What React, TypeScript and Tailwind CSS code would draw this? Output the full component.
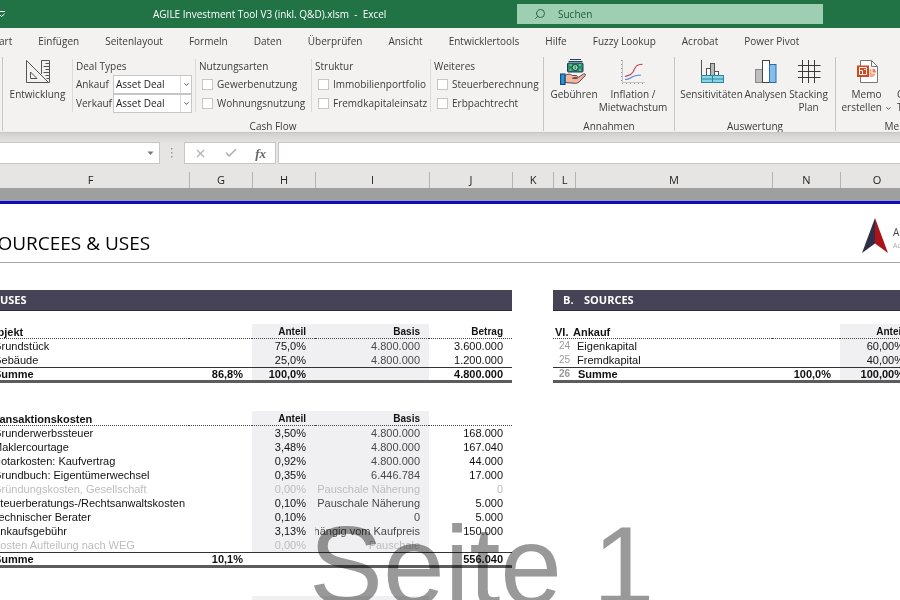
import type { ReactNode } from "react"
import { Check, ChevronDown, Search, X } from "lucide-react"

type Row = {
  no: string
  label: string
  share: string
  basis?: string
  amount?: string
  muted?: boolean
}

type Block = {
  numeral: string
  title: string
  amountHead?: string
  rows: Row[]
  total?: { no: string; pct: string; share: string; amount?: string; shaded: boolean }
}

const tabs = [
  "Start",
  "Einfügen",
  "Seitenlayout",
  "Formeln",
  "Daten",
  "Überprüfen",
  "Ansicht",
  "Entwicklertools",
  "Hilfe",
  "Fuzzy Lookup",
  "Acrobat",
  "Power Pivot",
]

const columns = [
  { name: "E", width: "w-[22px]" },
  { name: "F", width: "w-[198px]" },
  { name: "G", width: "w-[63px]" },
  { name: "H", width: "w-[63px]" },
  { name: "I", width: "w-[114px]" },
  { name: "J", width: "w-[83px]" },
  { name: "K", width: "w-[41px]" },
  { name: "L", width: "w-[22px]" },
  { name: "M", width: "w-[197px]" },
  { name: "N", width: "w-[68px]" },
  { name: "O", width: "w-[73px]" },
]

const uses: Block[] = [
  {
    numeral: "I.",
    title: "Objekt",
    amountHead: "Betrag",
    rows: [
      { no: "1", label: "Grundstück", share: "75,0%", basis: "4.800.000", amount: "3.600.000" },
      { no: "2", label: "Gebäude", share: "25,0%", basis: "4.800.000", amount: "1.200.000" },
    ],
    total: { no: "3", pct: "86,8%", share: "100,0%", amount: "4.800.000", shaded: true },
  },
  {
    numeral: "II.",
    title: "Transaktionskosten",
    rows: [
      { no: "4", label: "Grunderwerbssteuer", share: "3,50%", basis: "4.800.000", amount: "168.000" },
      { no: "5", label: "Maklercourtage", share: "3,48%", basis: "4.800.000", amount: "167.040" },
      { no: "6", label: "Notarkosten: Kaufvertrag", share: "0,92%", basis: "4.800.000", amount: "44.000" },
      { no: "7", label: "Grundbuch: Eigentümerwechsel", share: "0,35%", basis: "6.446.784", amount: "17.000" },
      { no: "8", label: "Gründungskosten, Gesellschaft", share: "0,00%", basis: "Pauschale Näherung", amount: "0", muted: true },
      { no: "9", label: "Steuerberatungs-/Rechtsanwaltskosten", share: "0,10%", basis: "Pauschale Näherung", amount: "5.000" },
      { no: "10", label: "Technischer Berater", share: "0,10%", basis: "0", amount: "5.000" },
      { no: "11", label: "Ankaufsgebühr", share: "3,13%", basis: "abhängig vom Kaufpreis", amount: "150.000" },
      { no: "12", label: "Kosten Aufteilung nach WEG", share: "0,00%", basis: "Pauschale", muted: true },
    ],
    total: { no: "13", pct: "10,1%", share: "", amount: "556.040", shaded: false },
  },
  { numeral: "III.", title: "Finanzierungskosten", rows: [] },
]

const sources: Block = {
  numeral: "VI.",
  title: "Ankauf",
  rows: [
    { no: "24", label: "Eigenkapital", share: "60,00%" },
    { no: "25", label: "Fremdkapital", share: "40,00%" },
  ],
  total: { no: "26", pct: "100,0%", share: "100,00%", shaded: true },
}

export default function App() {
  return (
    <div className="flex h-screen w-full flex-col overflow-hidden bg-white font-['Open_Sans','Noto_Sans',sans-serif] text-[10px] text-[#3b3b3b]">
      <TitleBar />
      <nav className="flex h-[26px] shrink-0 items-center gap-[26px] overflow-hidden bg-[#f3f2f1] whitespace-nowrap">
        {tabs.map((t) => (
          <button key={t} type="button" className="shrink-0 first:-ml-[10px]">
            {t}
          </button>
        ))}
      </nav>
      <Ribbon />
      <FormulaBar />
      <ColumnHeads />
      <Sheet />
    </div>
  )
}

function TitleBar() {
  return (
    <header className="flex h-[28px] shrink-0 items-center bg-[#217346] text-white">
      <button type="button" aria-label="Symbolleiste anpassen" className="w-[153px] shrink-0">
        <svg width="6" height="8" viewBox="0 0 6 8" fill="none" stroke="#fff" aria-hidden>
          <path d="M0 1.500h5M-1 4l2.500 2.500L4.500 4" />
        </svg>
      </button>
      <h1 className="w-[364px] shrink-0 whitespace-pre">AGILE Investment Tool V3 (inkl. Q&amp;D).xlsm  -  Excel</h1>
      <label className="flex h-[20px] w-[306px] items-center gap-[12px] bg-[#9fcfb3] pl-[17px] text-[#1c5c39]">
        <Search size={12} strokeWidth={1.75} className="-scale-x-100" aria-hidden />
        <input
          type="search"
          aria-label="Suchen"
          placeholder="Suchen"
          className="min-w-0 flex-1 bg-transparent outline-none placeholder:text-[#1c5c39]"
        />
      </label>
    </header>
  )
}

function Ribbon() {
  return (
    <div className="flex h-[79px] shrink-0 overflow-hidden border-b border-[#c8c6c4] bg-[#f3f2f1] pt-[3px] pb-[1px] whitespace-nowrap">
      <div className="w-[3px] shrink-0 border-r border-[#c8c6c4]" />
      <Group label="Cash Flow" className="w-[541px]">
        <RibbonButton label="Entwicklung" className="w-[69px]">
          <DesignIcon />
        </RibbonButton>
        <SubGroup title="Deal Types" className="w-[123px]">
          <DealSelect label="Ankauf" />
          <DealSelect label="Verkauf" />
        </SubGroup>
        <SubGroup title="Nutzungsarten" className="w-[116px]">
          <Tick label="Gewerbenutzung" />
          <Tick label="Wohnungsnutzung" />
        </SubGroup>
        <SubGroup title="Struktur" className="w-[119px]">
          <Tick label="Immobilienportfolio" />
          <Tick label="Fremdkapitaleinsatz" />
        </SubGroup>
        <SubGroup title="Weiteres" className="flex-1">
          <Tick label="Steuerberechnung" />
          <Tick label="Erbpachtrecht" />
        </SubGroup>
      </Group>
      <Group label="Annahmen" className="w-[131px]">
        <RibbonButton label="Gebühren" className="w-[60px]">
          <FeesIcon />
        </RibbonButton>
        <RibbonButton label={"Inflation /\nMietwachstum"} className="w-[58px]">
          <InflationIcon />
        </RibbonButton>
      </Group>
      <Group label="Auswertung" className="w-[161px]">
        <RibbonButton label="Sensitivitäten" className="w-[73px]">
          <SensitivityIcon />
        </RibbonButton>
        <RibbonButton label="Analysen" className="w-[35px]">
          <AnalysisIcon />
        </RibbonButton>
        <RibbonButton label={"Stacking\nPlan"} className="w-[51px]">
          <StackingIcon />
        </RibbonButton>
      </Group>
      <Group label="Memo" className="w-[128px]">
        <RibbonButton
          label={
            <>
              Memo
              <br />
              erstellen <ChevronDown size={7} strokeWidth={3} className="inline" aria-hidden />
            </>
          }
          className="w-[61px]"
        >
          <MemoIcon />
        </RibbonButton>
        <button type="button" className="flex flex-col pt-[31px] text-left leading-[13px] whitespace-pre">
          {"Chart\nTool"}
        </button>
      </Group>
    </div>
  )
}

function Group({ label, className, children }: { label: string; className: string; children: ReactNode }) {
  return (
    <section className={`flex shrink-0 flex-col border-r border-[#c8c6c4] ${className}`}>
      <div className="flex flex-1">{children}</div>
      <p className="text-center leading-[10px]">{label}</p>
    </section>
  )
}

function RibbonButton({ label, className, children }: { label: ReactNode; className: string; children: ReactNode }) {
  return (
    <button type="button" className={`flex shrink-0 flex-col items-center gap-[3px] pt-[2px] ${className}`}>
      {children}
      <span className="leading-[13px] whitespace-pre">{label}</span>
    </button>
  )
}

function SubGroup({ title, className, children }: { title: string; className: string; children: ReactNode }) {
  return (
    <div role="group" aria-label={title} className={`mt-[2px] h-[53px] border-l border-[#dcdad8] pl-[3px] ${className}`}>
      <p className="h-[16px] leading-[14px]">{title}</p>
      {children}
    </div>
  )
}

function DealSelect({ label }: { label: string }) {
  return (
    <label className="relative flex h-[19px] items-center">
      <span className="w-[37px]">{label}</span>
      <select className="h-[19px] w-[79px] appearance-none border border-[#c8c6c4] bg-white pl-[2px] text-[#222]">
        <option>Asset Deal</option>
        <option>Share Deal</option>
      </select>
      <span className="pointer-events-none absolute right-[4px] flex h-[17px] w-[11px] items-center justify-center border-l border-[#dcdad8]">
        <ChevronDown size={7} strokeWidth={3} aria-hidden />
      </span>
    </label>
  )
}

function Tick({ label }: { label: string }) {
  return (
    <label className="flex h-[19px] items-center gap-[4px] pl-[3px]">
      <input type="checkbox" className="size-[11px] appearance-none border border-[#c8c6c4] bg-white" />
      {label}
    </label>
  )
}

function FormulaBar() {
  return (
    <div className="flex h-[35px] shrink-0 items-start bg-linear-to-b from-[#d2d0ce] to-[#e6e5e4] to-30% pt-[9px]">
      <div className="flex h-[22px] w-[160px] shrink-0 items-center border border-l-0 border-[#c8c6c4] bg-white">
        <input aria-label="Namenfeld" className="min-w-0 flex-1 outline-none" />
        <svg width="16" height="5" viewBox="0 0 16 5" aria-hidden>
          <path d="M4.500 0.500h6l-3 3.500z" fill="#777" />
        </svg>
      </div>
      <svg width="24" height="22" viewBox="0 0 24 22" fill="#999" className="shrink-0" aria-hidden>
        <path d="M11 6h1.500v1.500H11zM11 10h1.500v1.500H11zM11 14h1.500v1.500H11z" />
      </svg>
      <div className="flex h-[22px] w-[92px] shrink-0 items-center justify-between border border-[#c8c6c4] bg-white px-[9px]">
        <button type="button" aria-label="Abbrechen">
          <X size={13} strokeWidth={2.25} className="text-[#b5b3b1]" />
        </button>
        <button type="button" aria-label="Eingeben">
          <Check size={14} strokeWidth={2.75} className="text-[#b5b3b1]" />
        </button>
        <button
          type="button"
          className="font-['Liberation_Serif',serif] text-[13px] leading-none font-bold text-[#666] italic"
        >
          fx
        </button>
      </div>
      <input
        aria-label="Bearbeitungsleiste"
        className="ml-[2px] h-[22px] min-w-0 flex-1 border border-r-0 border-[#c8c6c4] bg-white outline-none"
      />
    </div>
  )
}

function ColumnHeads() {
  return (
    <div className="shrink-0 overflow-hidden border-b-3 border-[#1010a8] bg-[#a09f9f]">
      <div className="h-[20px] bg-[#e6e5e4] pt-[4px]">
        <div className="-ml-[31px] flex text-[11px] leading-[16px] text-[#222]">
          {columns.map((c) => (
            <span key={c.name} className={`h-[16px] shrink-0 border-l border-[#b5b3b1] text-center ${c.width}`}>
              {c.name}
            </span>
          ))}
        </div>
      </div>
      <div className="h-[13px] border-b border-[#9a96e0]" />
    </div>
  )
}

function Sheet() {
  return (
    <main className="relative flex-1 overflow-hidden font-['Liberation_Sans',Arial,sans-serif] text-[11px] text-[#111]">
      <div className="flex h-[59px] items-center justify-between border-b border-[#a6a6a6]">
        <h2 className="-ml-[13px] pt-[19px] font-['Open_Sans','Noto_Sans',sans-serif] text-[19px] leading-[26px] text-black">
          SOURCEES &amp; USES
        </h2>
        <div className="-mr-[24px] flex items-center gap-[5px] pt-[5px]">
          <svg width="26" height="35" viewBox="0 0 26 35" aria-hidden>
            <path d="M13 0v25.500L0 35z" fill="#302d47" />
            <path d="M13 0v25.500L26 35z" fill="#ac1319" />
          </svg>
          <p className="w-[31px] overflow-hidden pt-[4px] font-['Open_Sans',sans-serif] text-[10px] leading-[12px] text-[#444]">
            AGILE
            <br />
            <span className="text-[7px] leading-[8px] text-[#aaa]">Accounts</span>
          </p>
        </div>
      </div>
      <div className="-ml-[31px] flex gap-[41px] pt-[27px]">
        <section className="w-[543px] shrink-0">
          <Band letter="A." title="USES" />
          {uses.map((b) => (
            <UsesTable key={b.title} block={b} />
          ))}
        </section>
        <section className="w-[360px] shrink-0">
          <Band letter="B." title="SOURCES" />
          <SourcesTable block={sources} />
        </section>
      </div>
      <span
        className="pointer-events-none absolute top-[307px] left-[309px] text-[111px] leading-none whitespace-nowrap text-[#999] mix-blend-multiply"
        aria-hidden
      >
        Seite 1
      </span>
    </main>
  )
}

function Band({ letter, title }: { letter: string; title: string }) {
  return (
    <h3 className="mb-[13px] flex h-[21px] items-center border-b border-[#2e2b3c] bg-[#474357] pl-[10px] font-['Open_Sans','Noto_Sans',sans-serif] text-[11px] font-bold text-white">
      <span className="w-[21px]">{letter}</span>
      {title}
    </h3>
  )
}

const head = "h-[15px] border-b border-dotted border-[#444] pt-[2px] pr-[9px] text-right text-[10px] leading-[12px]"
const sum = "h-[16px] border-t border-b-3 border-t-[#333] border-b-[#5c5c5c] pr-[9px] text-right leading-[12px]"
const cell = "h-[14px] pr-[9px] text-right leading-[14px]"

function BlockTitle({ block }: { block: Block }) {
  return (
    <th
      colSpan={2}
      className="h-[15px] border-b border-dotted border-[#444] pt-[2px] pl-[2px] text-left leading-[12px]"
    >
      <span className="inline-block min-w-[18px]">{block.numeral}</span>
      {block.title}
    </th>
  )
}

function LabelCells({ row }: { row: Row }) {
  return (
    <>
      <td className="h-[14px] pl-[6px] text-[10px] leading-[14px] text-[#999]">{row.no}</td>
      <td className="h-[14px] pl-[2px] leading-[14px]">{row.label}</td>
    </>
  )
}

function UsesTable({ block }: { block: Block }) {
  const { total } = block
  const filled = block.rows.length > 0
  return (
    <table className="mb-[28px] w-full table-fixed border-separate border-spacing-0 whitespace-nowrap">
      <colgroup>
        <col className="w-[22px]" />
        <col className="w-[198px]" />
        <col className="w-[63px]" />
        <col className="w-[63px]" />
        <col className="w-[114px]" />
        <col className="w-[83px]" />
      </colgroup>
      <thead>
        <tr>
          <BlockTitle block={block} />
          <th className={head} />
          <th className={`bg-[#f0f0f2] ${head}`}>{filled && "Anteil"}</th>
          <th className={`bg-[#f0f0f2] ${head}`}>{filled && "Basis"}</th>
          <th className={head}>{block.amountHead}</th>
        </tr>
      </thead>
      <tbody>
        {block.rows.map((r) => (
          <tr key={r.no} className={r.muted ? "text-[#bdbdbd]" : ""}>
            <LabelCells row={r} />
            <td />
            <td className={`bg-[#f0f0f2] ${cell}`}>{r.share}</td>
            <td className={`bg-[#f0f0f2] ${cell} ${r.muted ? "" : "text-[#4a4a4a]"}`}>
              <span className="flex justify-end overflow-hidden">{r.basis}</span>
            </td>
            <td className={cell}>{r.amount}</td>
          </tr>
        ))}
      </tbody>
      {total && (
        <tfoot className="font-bold">
          <tr>
            <td className={`${sum} text-[10px] text-[#999]`}>{total.no}</td>
            <td className={`${sum} pl-[3px] text-left!`}>Summe</td>
            <td className={sum}>{total.pct}</td>
            <td className={`${sum} ${total.shaded ? "bg-[#f0f0f2]" : ""}`}>{total.share}</td>
            <td className={`${sum} ${total.shaded ? "bg-[#f0f0f2]" : ""}`} />
            <td className={sum}>{total.amount}</td>
          </tr>
        </tfoot>
      )}
    </table>
  )
}

function SourcesTable({ block }: { block: Block }) {
  return (
    <table className="w-full table-fixed border-separate border-spacing-0 whitespace-nowrap">
      <colgroup>
        <col className="w-[22px]" />
        <col className="w-[197px]" />
        <col className="w-[68px]" />
        <col className="w-[73px]" />
      </colgroup>
      <thead>
        <tr>
          <BlockTitle block={block} />
          <th className={head} />
          <th className={`bg-[#f0f0f2] ${head}`}>Anteil</th>
        </tr>
      </thead>
      <tbody>
        {block.rows.map((r) => (
          <tr key={r.no}>
            <LabelCells row={r} />
            <td />
            <td className={`bg-[#f0f0f2] ${cell}`}>{r.share}</td>
          </tr>
        ))}
      </tbody>
      <tfoot className="font-bold">
        <tr>
          <td className={`${sum} pl-[6px] text-left! text-[10px] text-[#999]`}>{block.total?.no}</td>
          <td className={`${sum} pl-[3px] text-left!`}>Summe</td>
          <td className={sum}>{block.total?.pct}</td>
          <td className={`bg-[#f0f0f2] ${sum}`}>{block.total?.share}</td>
        </tr>
      </tfoot>
    </table>
  )
}

// Set square and ruler
function DesignIcon() {
  return (
    <svg width="26" height="26" viewBox="0 0 26 26" fill="none" stroke="#555" aria-hidden>
      <path d="M16.500 15V1.500h8v22h-3M1.500 1.500v22h22zM5.500 13v6.500H12z" />
      <path d="M20.500 4.500h4M18.500 7.500h6M20.500 10.500h4M18.500 13.500h6M20.500 16.500h4M21.500 19.500h3" />
    </svg>
  )
}

// Banknotes over an open hand
function FeesIcon() {
  return (
    <svg width="28" height="26" viewBox="0 0 28 26" aria-hidden>
      <path d="M10 0.500h11M8.500 2.500h14" stroke="#24415f" strokeWidth="1.200" />
      <rect x="7.500" y="4" width="15.500" height="9" rx="1" fill="#2b8f6c" stroke="#1e3a5c" />
      <path d="M9.500 6h2M19 6h2M9.500 11h2M19 11h2" stroke="#9be8a0" />
      <circle cx="15.200" cy="8.500" r="3" fill="#8fe39a" stroke="#1e3a5c" />
      <path d="M15.200 7v3" stroke="#1e6c4c" />
      <path
        d="M5 16.500c3-2 5-1.500 7.500 0h4c1.500.500 1 2 0 2.500h-3 4l6-4c1.500-.700 2.500.500 1.500 1.800L19 23c-1.500 1.200-3 1.500-5 1.200L5 23.500z"
        fill="#f4b69c"
        stroke="#4a3444"
        strokeWidth=".9"
      />
      <path d="M12 19.200h5" stroke="#4a3444" strokeWidth=".8" />
      <rect x="0.600" y="15" width="4.400" height="10.500" fill="#2496e0" stroke="#17446f" strokeWidth="1.100" />
    </svg>
  )
}

// Two rising curves on dotted axes
function InflationIcon() {
  return (
    <svg width="26" height="26" viewBox="0 0 26 26" fill="none" aria-hidden>
      <path d="M2.500 1v22.500H25" stroke="#c4c4c8" />
      <path d="M1.500 1v22.500M2 24.500h23" stroke="#999" strokeDasharray="1 3" />
      <path d="M5 17.500c4-1.500 6-1 8-4.500s2-7 7-7.500l2.500-.200" stroke="#c2485c" strokeWidth="1.200" />
      <path d="M5 20.500c4 0 5-1.500 8-3s5-1 8-1.500" stroke="#5a86dc" strokeWidth="1.200" />
    </svg>
  )
}

// Histogram over a data grid
function SensitivityIcon() {
  return (
    <svg width="26" height="26" viewBox="0 0 26 26" fill="none" stroke="#555" aria-hidden>
      <path d="M2.500 1v17" />
      <rect x="7.500" y="9.500" width="4" height="8" fill="#fff" />
      <rect x="11.500" y="4.500" width="4" height="13" fill="#bbb" />
      <rect x="15.500" y="12.500" width="4" height="5" fill="#fff" />
      <rect x="2.500" y="16.500" width="22" height="7" fill="#8fd3e6" stroke="#2589a5" />
      <path d="M2.500 20H24.500M13.500 16.500v7" stroke="#2589a5" />
    </svg>
  )
}

function AnalysisIcon() {
  return (
    <svg width="26" height="26" viewBox="0 0 26 26" stroke="#444" aria-hidden>
      <rect x="2.500" y="10.500" width="7" height="13" fill="#bdbdbd" stroke="#888" />
      <rect x="9.500" y="1.500" width="7" height="22" fill="#fff" />
      <rect x="16.500" y="5.500" width="6.500" height="18" fill="#83beec" stroke="#2a6ca8" />
    </svg>
  )
}

function StackingIcon() {
  return (
    <svg width="26" height="26" viewBox="0 0 26 26" stroke="#3a3a3a" aria-hidden>
      <path d="M6.500 1v23M12.500 1v23M18.500 1v23M2 6.500h22.500M2 12.500h22.500M2 18.500h22.500" />
    </svg>
  )
}

// Document with a presentation badge
function MemoIcon() {
  return (
    <svg width="26" height="26" viewBox="0 0 26 26" fill="none" aria-hidden>
      <path d="M6.500 1.500h11l6 6v16h-17z" fill="#fff" stroke="#777" />
      <path d="M17.500 1.500v6h6" stroke="#777" />
      <path d="M15.500 10h2v4.500h4a4 4 0 0 1-6 3z" fill="#f3a88d" />
      <path d="M18.500 9.500v4h3.500a4 4 0 0 0-3.500-4z" fill="#e57f5c" />
      <rect x="3" y="6.500" width="12" height="11.500" fill="#d2481f" />
      <path d="M5.500 8.500h7v7h-7z" stroke="#fff" />
      <path d="M5.500 11.500h3v4M10 10.500h1.500" stroke="#fff" />
    </svg>
  )
}
